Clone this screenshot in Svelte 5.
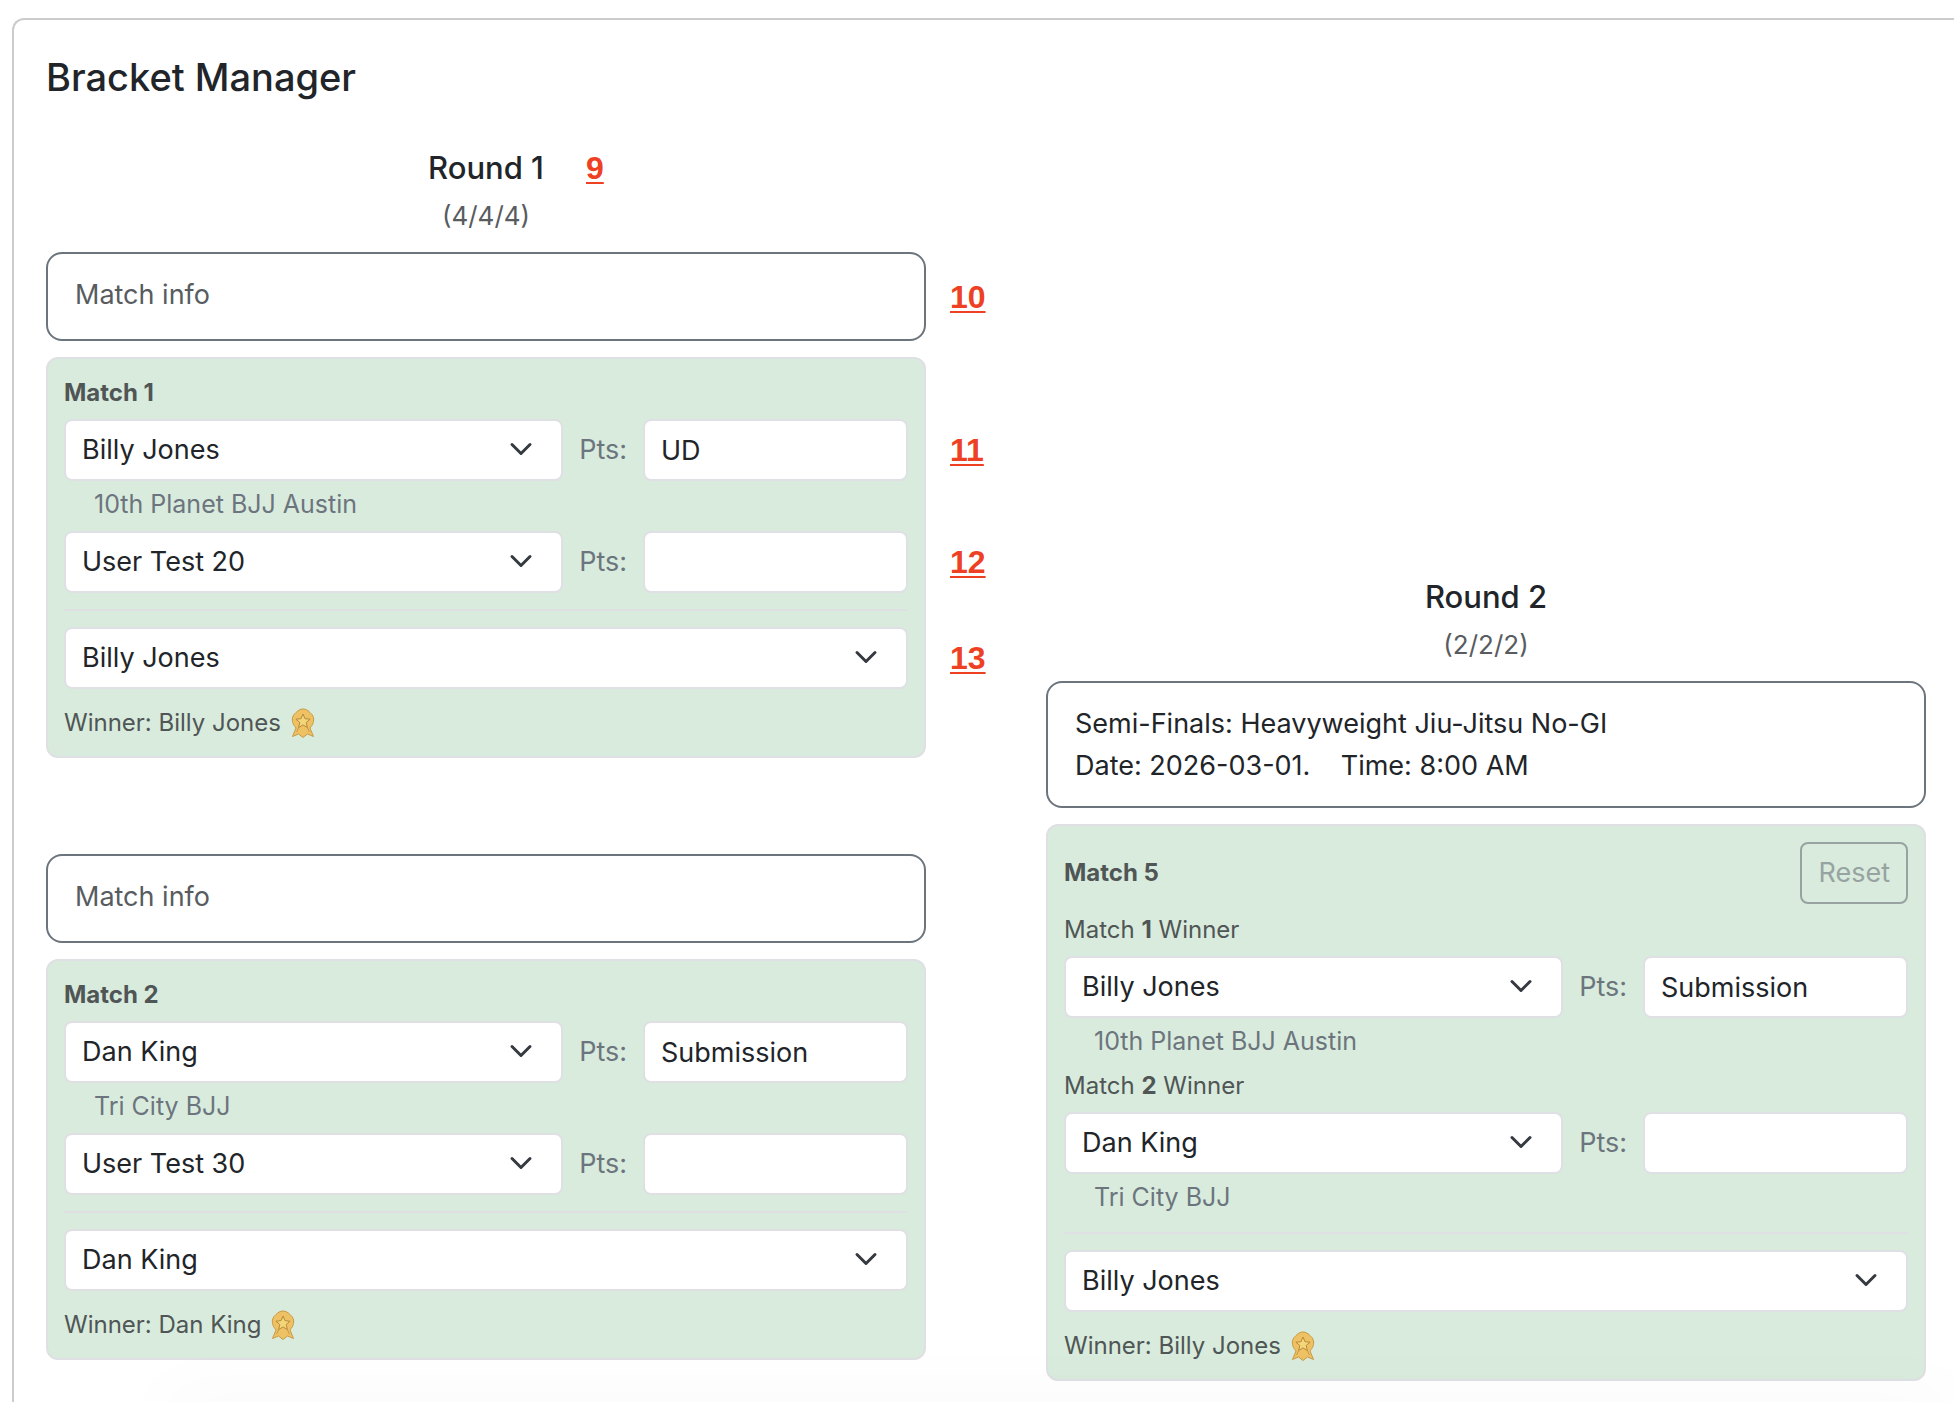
<script>
	let rounds = $state([
		{
			name: 'Round 1',
			count: '(4/4/4)',
			note: 9,
			matches: [
				{
					id: 1,
					info: '',
					infoNote: 10,
					reset: false,
					players: [
						{ name: 'Billy Jones', school: '10th Planet BJJ Austin', pts: 'UD', note: 11 },
						{ name: 'User Test 20', school: '', pts: '', note: 12 }
					],
					winner: 'Billy Jones',
					winnerNote: 13
				},
				{
					id: 2,
					info: '',
					reset: false,
					players: [
						{ name: 'Dan King', school: 'Tri City BJJ', pts: 'Submission' },
						{ name: 'User Test 30', school: '', pts: '' }
					],
					winner: 'Dan King'
				}
			]
		},
		{
			name: 'Round 2',
			count: '(2/2/2)',
			matches: [
				{
					id: 5,
					info: 'Semi-Finals: Heavyweight Jiu-Jitsu No-GI\nDate: 2026-03-01.    Time: 8:00 AM',
					reset: true,
					players: [
						{ from: 1, name: 'Billy Jones', school: '10th Planet BJJ Austin', pts: 'Submission' },
						{ from: 2, name: 'Dan King', school: 'Tri City BJJ', pts: '' }
					],
					winner: 'Billy Jones'
				}
			]
		}
	]);

	const athletes = ['Billy Jones', 'User Test 20', 'Dan King', 'User Test 30'];
</script>

<svelte:head>
	<title>Bracket Manager</title>
</svelte:head>

{#snippet noteLink(n)}
	<a class="note" href="#note-{n}">{n}</a>
{/snippet}

{#snippet chevron()}
	<svg class="chevron" viewBox="0 0 16 16" aria-hidden="true"><path d="m2 5 6 6 6-6" /></svg>
{/snippet}

<main class="panel">
	<h1>Bracket Manager</h1>

	<div class="bracket">
		{#each rounds as round}
			<section class="round">
				<header>
					<h2>
						{round.name}
						{#if round.note}{@render noteLink(round.note)}{/if}
					</h2>
					<p class="count">{round.count}</p>
				</header>

				{#each round.matches as match (match.id)}
					<article class="match">
						<div class="info">
							<textarea
								rows={match.info ? 2 : 1}
								placeholder="Match info"
								aria-label="Match {match.id} info"
								spellcheck="false"
								bind:value={match.info}
							></textarea>
							{#if match.infoNote}{@render noteLink(match.infoNote)}{/if}
						</div>

						<div class="card">
							<div class="card-head">
								<h3>Match {match.id}</h3>
								{#if match.reset}<button type="button" disabled>Reset</button>{/if}
							</div>

							{#each match.players as player, i}
								{#if player.from}
									<p class="from">Match <b>{player.from}</b> Winner</p>
								{/if}
								<div class="row">
									<div class="select">
										<select aria-label="Match {match.id} athlete {i + 1}" bind:value={player.name}>
											{#each athletes as name}<option>{name}</option>{/each}
										</select>
										{@render chevron()}
									</div>
									<label for="pts-{match.id}-{i}">Pts:</label>
									<input id="pts-{match.id}-{i}" type="text" bind:value={player.pts} />
									{#if player.note}{@render noteLink(player.note)}{/if}
								</div>
								{#if player.school}<p class="school">{player.school}</p>{/if}
							{/each}

							<hr />

							<div class="row">
								<div class="select">
									<select aria-label="Match {match.id} winner" bind:value={match.winner}>
										{#each athletes as name}<option>{name}</option>{/each}
									</select>
									{@render chevron()}
								</div>
								{#if match.winnerNote}{@render noteLink(match.winnerNote)}{/if}
							</div>

							<p class="winner">
								Winner: {match.winner}
								<svg class="medal" viewBox="0 0 24 30" aria-hidden="true">
									<path d="M12 1C15 1 17 2.500 19 4.500 22 7 23.300 10 22.500 13.500 22 16.500 20 18.500 19 20L22.500 28.500 16.500 26 12 29.500 7.500 26 1.500 28.500 5 20C4 18.500 2 16.500 1.500 13.500 .7 10 2 7 5 4.500 7 2.500 9 1 12 1Z" />
									<path d="m7.600 19.600-2 4.500M16.400 19.600l2 4.500" />
									<path class="star" d="M12 6 14 10.700 19.100 11.200 15.200 14.500 16.400 19.600 12 16.900 7.600 19.600 8.800 14.500 4.900 11.200 10 10.700Z" />
								</svg>
							</p>
						</div>
					</article>
				{/each}
			</section>
		{/each}
	</div>
</main>

<div class="edge-shade"></div>

<style>
	:global(body) {
		margin: 0;
		background: #fff;
		color: #212529;
		font-family: Inter, "Liberation Sans", sans-serif;
		font-size: 28px;
		line-height: 42px;
	}
	h1, h2, h3, p { margin: 0; }
	.panel {
		margin: 18px 0 0 12px;
		padding: 33px 28px 38px 32px;
		border: 2px solid #ccc;
		border-right: 0;
		border-bottom: 0;
		border-radius: 12px 0 0 0;
	}
	h1 { font-size: 38px; font-weight: 500; line-height: 48px; }
	.bracket { display: flex; align-items: flex-start; gap: 120px; margin-top: 48px; }
	.round { flex: 1; min-width: 0; }
	.round + .round { margin-top: 429px; }
	header { text-align: center; margin-bottom: 15px; }
	h2 {
		position: relative;
		width: fit-content;
		margin: 0 auto 8px;
		font-size: 31px;
		font-weight: 500;
		line-height: 38px;
	}
	.count { color: #585c5f; font-size: 26px; }
	.match + .match { margin-top: 96px; }

	.note {
		position: absolute;
		left: calc(100% + 42px);
		top: 50%;
		transform: translateY(-50%);
		color: #ee4023;
		font: bold 32px/36px "Liberation Sans", sans-serif;
		text-decoration-thickness: 2px;
		text-underline-offset: 3px;
	}
	.info .note { left: calc(100% + 24px); }

	.info { position: relative; display: flex; margin-bottom: 16px; }
	textarea {
		flex: 1;
		box-sizing: border-box;
		min-height: 89px;
		padding: 20px 27px 19px;
		border: 2px solid #6c757d;
		border-radius: 16px;
		background: #fff;
		color: inherit;
		font: inherit;
		font-size: 27px;
		resize: none;
		overflow: hidden;
	}
	textarea::placeholder { color: #585c5f; opacity: 1; }

	.card {
		padding: 16px 16px 15px;
		border: 2px solid #dee0e4;
		border-radius: 12px;
		background: #d9ebdd;
	}
	.card-head { display: flex; align-items: center; justify-content: space-between; margin-bottom: 8px; }
	h3 { color: #4f5655; font-size: 24px; font-weight: 700; line-height: 36px; }
	button {
		height: 62px;
		padding: 0 16px;
		border: 2px solid #97a3a1;
		border-radius: 8px;
		background: none;
		color: #97a3a1;
		font: inherit;
		font-size: 27px;
	}
	.from { margin-bottom: 8px; color: #4f5655; font-size: 24px; line-height: 36px; }
	.row { position: relative; display: flex; align-items: center; gap: 16px; }
	.select { position: relative; flex: 1; display: flex; }
	select, input {
		box-sizing: border-box;
		height: 62px;
		padding: 0 16px;
		border: 2px solid #dee0e4;
		border-radius: 8px;
		background: #fff;
		color: inherit;
		font: inherit;
		font-size: 27px;
	}
	select { flex: 1; min-width: 0; appearance: none; }
	input { flex: none; width: 265px; }
	label { color: #6c757d; font-size: 27px; }
	.chevron {
		position: absolute;
		right: 30px;
		top: 18px;
		width: 24px;
		height: 24px;
		fill: none;
		stroke: #343a40;
		stroke-width: 2;
		stroke-linecap: round;
		stroke-linejoin: round;
		pointer-events: none;
	}
	.school { margin: 4px 0 8px; padding-left: 30px; color: #6c757d; font-size: 25px; line-height: 38px; }
	hr { margin: 16px 0; border: 0; border-top: 2px solid #dee0e4; }
	.winner {
		display: flex;
		align-items: center;
		gap: 10px;
		margin-top: 16px;
		color: #4f5655;
		font-size: 24px;
		line-height: 36px;
	}
	.medal { width: 24px; height: 30px; fill: #edc164; stroke: #c99a45; stroke-width: 1; }
	.medal .star { fill: #f3d67a; stroke: #b88a3a; }

	/* soft shade rising from the bottom edge of the window */
	.edge-shade {
		position: fixed;
		inset: 100% 0 auto 160px;
		height: 20px;
		box-shadow: 0 0 70px rgba(0, 0, 0, 0.06);
		pointer-events: none;
	}
</style>
